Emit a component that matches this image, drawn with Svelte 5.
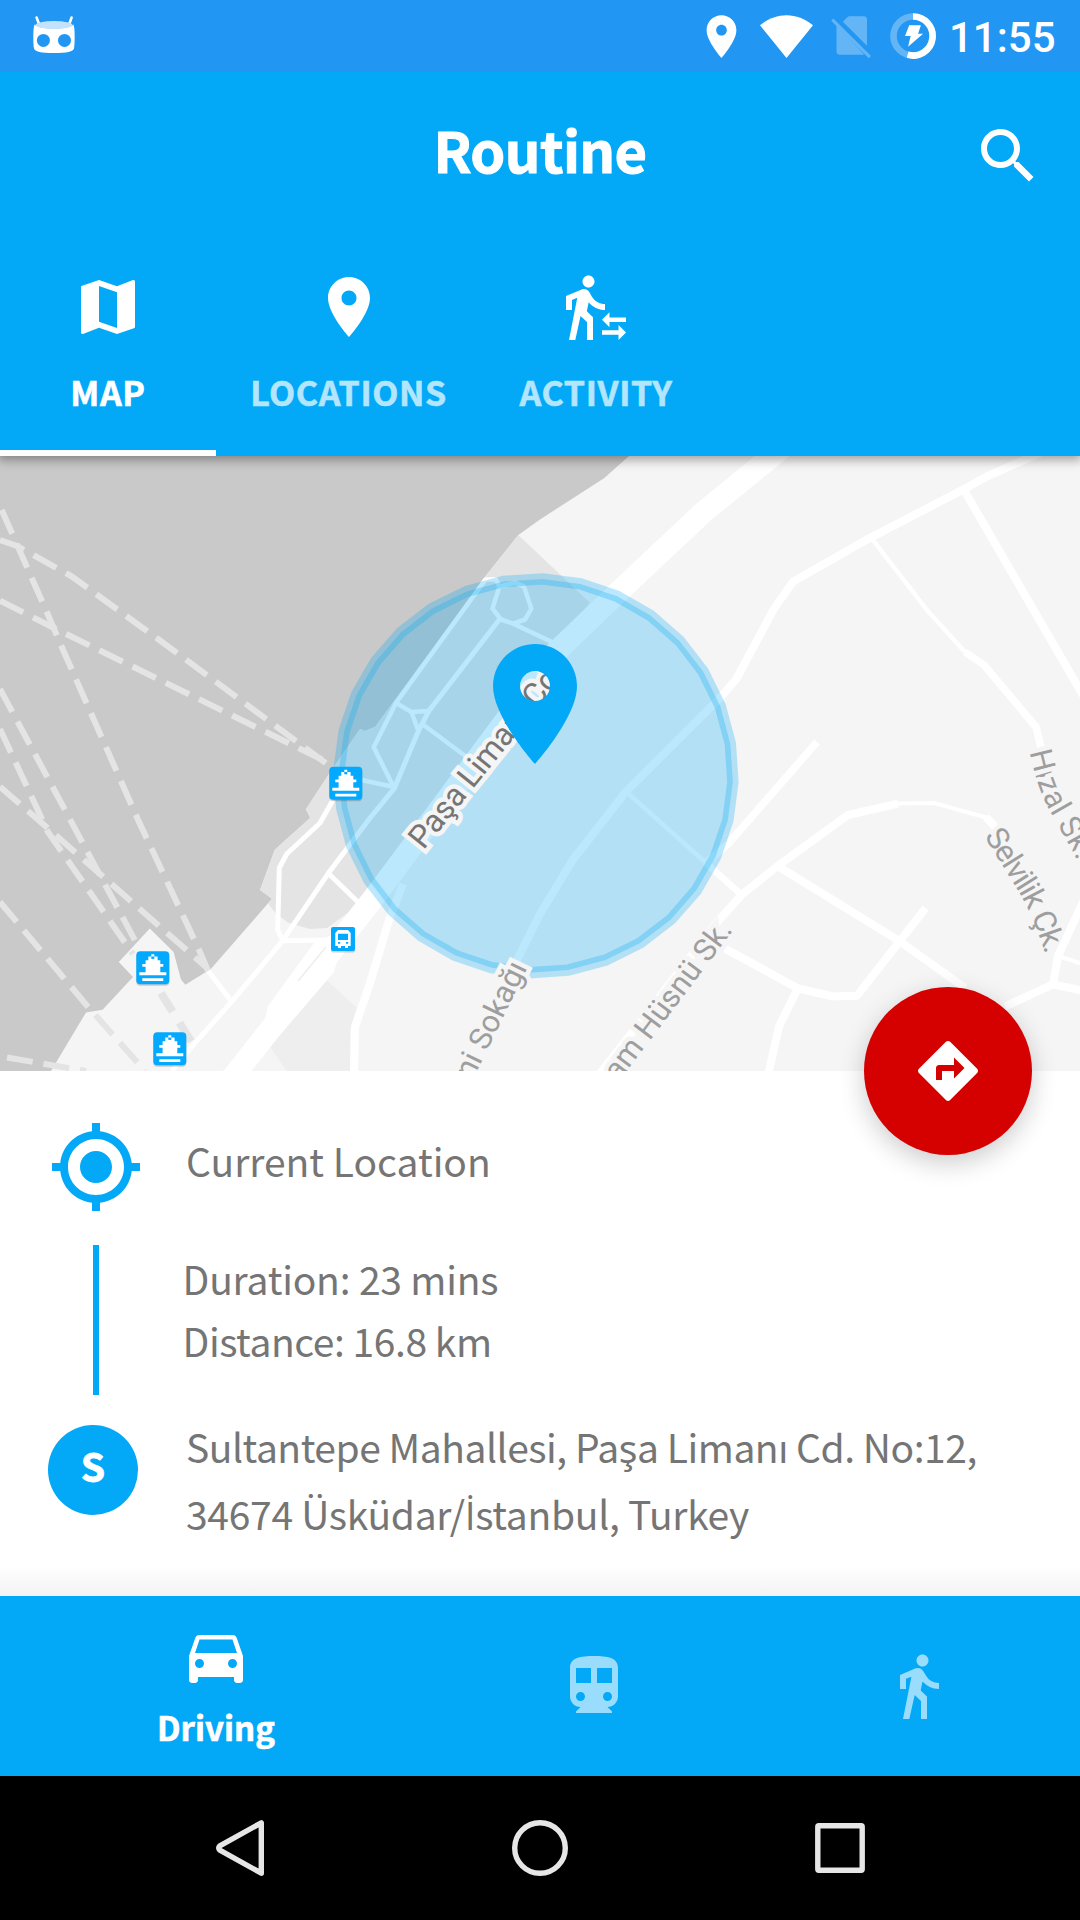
<script>
  const tabs = [
    { label: 'MAP', icon: 'map', active: true },
    { label: 'LOCATIONS', icon: 'place', active: false },
    { label: 'ACTIVITY', icon: 'transfer', active: false },
  ];

  const icons = {
    search: 'M15.5 14h-.79l-.28-.27C15.41 12.59 16 11.11 16 9.5 16 5.91 13.09 3 9.5 3S3 5.91 3 9.5 5.91 16 9.5 16c1.61 0 3.09-.59 4.23-1.57l.27.28v.79l5 4.99L20.49 19l-4.99-5zm-6 0C7.01 14 5 11.99 5 9.5S7.01 5 9.5 5 14 7.01 14 9.5 11.99 14 9.5 14z',
    map: 'M20.5 3l-.16.03L15 5.1 9 3 3.36 4.9c-.21.07-.36.25-.36.48V20.5c0 .28.22.5.5.5l.16-.03L9 18.9l6 2.1 5.64-1.9c.21-.07.36-.25.36-.48V3.5c0-.28-.22-.5-.5-.5zM15 19l-6-2.11V5l6 2.11V19z',
    place: 'M12 2C8.13 2 5 5.13 5 9c0 5.25 7 13 7 13s7-7.75 7-13c0-3.87-3.13-7-7-7zm0 9.5c-1.38 0-2.5-1.12-2.5-2.5s1.12-2.5 2.5-2.5 2.5 1.12 2.5 2.5-1.12 2.5-2.5 2.5z',
    transfer: 'M16.49 15.5v-1.75L14 16.25l2.49 2.5V17H22v-1.5zM19.51 19.75H14v1.5h5.51V23L22 20.5 19.51 18zM9.5 5.5c1.1 0 2-.9 2-2s-.9-2-2-2-2 .9-2 2 .9 2 2 2zM5.75 8.9L3 23h2.1l1.75-8L9 17v6h2v-7.55L8.95 13.4l.6-3C10.85 12 12.8 13 15 13v-2c-1.85 0-3.45-1-4.35-2.45l-.95-1.6C9.35 6.35 8.7 6 8 6c-.25 0-.5.05-.75.15L2 8.3V13h2V9.65l1.75-.75',
    directions: 'M21.71 11.29l-9-9c-.39-.39-1.02-.39-1.41 0l-9 9c-.39.39-.39 1.02 0 1.41l9 9c.39.39 1.02.39 1.41 0l9-9c.39-.38.39-1.01 0-1.41zM14 14.5V12h-4v3H8v-4c0-.55.45-1 1-1h5V7.5l3.5 3.5-3.5 3.5z',
    target: 'M12 8c-2.21 0-4 1.79-4 4s1.79 4 4 4 4-1.79 4-4-1.79-4-4-4zm8.94 3c-.46-4.17-3.77-7.48-7.94-7.94V1h-2v2.06C6.83 3.52 3.52 6.83 3.06 11H1v2h2.06c.46 4.17 3.77 7.48 7.94 7.94V23h2v-2.06c4.17-.46 7.48-3.77 7.94-7.94H23v-2h-2.06zM12 19c-3.87 0-7-3.13-7-7s3.13-7 7-7 7 3.13 7 7-3.13 7-7 7z',
    car: 'M18.92 6.01C18.72 5.42 18.16 5 17.5 5h-11c-.66 0-1.21.42-1.42 1.01L3 12v8c0 .55.45 1 1 1h1c.55 0 1-.45 1-1v-1h12v1c0 .55.45 1 1 1h1c.55 0 1-.45 1-1v-8l-2.08-5.99zM6.5 16c-.83 0-1.5-.67-1.5-1.5S5.67 13 6.5 13s1.5.67 1.5 1.5S7.33 16 6.5 16zm11 0c-.83 0-1.5-.67-1.5-1.5s.67-1.5 1.5-1.5 1.5.67 1.5 1.5-.67 1.5-1.5 1.5zM5 11l1.5-4.5h11L19 11H5z',
    subway: 'M12 2c-4.42 0-8 .5-8 4v9.5C4 17.43 5.57 19 7.5 19L6 20.5v.5h12v-.5L16.5 19c1.93 0 3.5-1.57 3.5-3.5V6c0-3.5-3.58-4-8-4zM7.5 17c-.83 0-1.5-.67-1.5-1.5S6.67 14 7.5 14s1.5.67 1.5 1.5S8.33 17 7.5 17zm3.5-6H6V6h5v5zm5.5 6c-.83 0-1.5-.67-1.5-1.5s.67-1.5 1.5-1.5 1.5.67 1.5 1.5-.67 1.5-1.5 1.5zm1.5-6h-5V6h5v5z',
    walk: 'M13.5 5.5c1.1 0 2-.9 2-2s-.9-2-2-2-2 .9-2 2 .9 2 2 2zM9.8 8.9L7 23h2.1l1.8-8 2.1 2v6h2v-7.5l-2.1-2 .6-3C14.8 12 16.8 13 19 13v-2c-1.9 0-3.5-1-4.3-2.4l-1-1.6c-.4-.6-1-1-1.7-1-.3 0-.5.1-.8.1L6 8.3V13h2V9.6l1.8-.7',
  };

  // Ferry lines across the water
  const ferryLines = [
    '1.7,510 48,614.7 60,643 138,819.7 200,952 208,971',
    '0,540 17,546 72,576.6 158,639 331,767',
    '0,600.7 52,627 331,764',
    '0,689 138,946',
    '0,729 48,832 133,954',
    '0,786.7 45,825.7 207,968',
    '0,902 86,1004.5 145,1071',
    '7,1057.5 86,1071',
  ];

  // Streets, as [width, points]
  const streets = [
    [5, '333,800 320,823 286.7,854 279.3,868 277.7,930 282.7,940.7 330,940'],
    [5, '172,1071 191.7,1046.7 231.7,1001.7 282.7,940.7 328.3,873.3 370,818 394.3,788.3 418.4,731 428.8,711 499.4,619.5'],
    [5, '231.7,1001.7 208.3,971'],
    [5, '328.3,873.3 360,904'],
    [4.5, '394.3,788.3 373.7,747.3 396,703 485.6,579.4 496,579.4 499.4,586.6 492.5,608.7 501,619.5 513,623.6 525,619.5 531.4,608.7 524,586.6 515,582.6 499.4,586.6'],
    [4.5, '513,623.6 552,642'],
    [4.5, '361.6,780 394,787'],
    [4.5, '396,703 411.5,712 428.8,711'],
    [4.5, '411.5,712 418.4,731'],
    [4.5, '423.6,725 472,761'],
    [8, '403,884 389,920 370,983 355,1027 354,1075'],
    [8, '510,975 517,960 540,914 572.7,860 626,791.5 719,699 736.3,679 774,608.7 793,581.8 870.6,537.6 963.6,489.4 987.7,476 1040,453'],
    [4.5, '871,537.6 927.5,610.7 965,652'],
    [7.5, '965,652 984,665 1036,727 1041,747'],
    [8, '964,490 1084,697'],
    [4.5, '626,791.5 705,862'],
    [6.5, '705,862 741.5,895'],
    [7.5, '817,742 728,844 705,864'],
    [8, '719,920 741.5,895 777.6,866 848,815 898,803.6'],
    [4, '898,803.6 934,803 988,818'],
    [8, '986,817 995,827'],
    [8, '777.6,866 900,941.4 965,988'],
    [8, '925.7,908 857,995.7 833,996.5 798,988.4 724,948'],
    [8, '798,988 779,1026.6 768,1075'],
    [8, '1005,1006.5 1053,984.4 1084,991'],
    [8, '1053,984.4 1058,956 1084,900'],
    [4, '1058,956 1084,964.5'],
    [8, '719,920 599,1075'],
    [22, '782,448 703.6,512 615.8,594.6 557,651 396,868 372,900 237.6,1071 225,1087'],
  ];

  const ferries = [[329.3, 766.7], [136.3, 951.3], [153.3, 1032.3]];

  const SIDES = 32;
  const radius = Array.from({ length: SIDES }, (_, i) => {
    const a = ((i * 360) / SIDES + 1.8) * (Math.PI / 180);
    return `${(536 + 197 * Math.sin(a)).toFixed(1)},${(775.8 - 197 * Math.cos(a)).toFixed(1)}`;
  }).join(' ');
</script>

{#snippet icon(name)}
  <svg class="icon" viewBox="0 0 24 24"><path d={icons[name]} /></svg>
{/snippet}

<div class="screen">
  <div class="status">
    <svg class="robot" viewBox="33 14 42 42">
      <path d="M36.6 17.5L39 24M71.6 17.5L69.3 24" stroke="#fff" stroke-width="2.6" stroke-linecap="round" />
      <path fill="#fff" fill-rule="evenodd" d="M34.5 24.5c5 5.5 34 5.5 39 0 1.5 3 1.5 19 .5 24-.8 3-7 4.6-20 4.600s-19.200-1.600-20-4.600c-1-5-1-21 .5-24zM43.400 33.900a6.500 6.500 0 1 0 0 13 6.500 6.500 0 1 0 0-13zM64.500 33.900a6.500 6.500 0 1 0 0 13 6.500 6.500 0 1 0 0-13z" />
      <ellipse cx="54" cy="25" rx="18.500" ry="4" fill="#c5e2fc" />
    </svg>
    <div class="indicators">
      <svg class="gps" viewBox="0 0 24 24"><path d={icons.place} /></svg>
      <svg class="wifi" viewBox="760 14 53 43"><path d="M786.500 57L760 24.200C768 17.600 777 14.200 786.500 14.200S805 17.600 813 24.200z" /></svg>
      <svg class="sim" viewBox="831 14 40 46">
        <path d="M842.800 21.700l4.500-4.500q1-1 2.300-1h14q3.400 0 3.400 3.400v26.200zM836.500 24.500l27.700 30q-.5.300-1.200.300h-23q-3.500 0-3.500-3.500z" />
        <path d="M833.300 18.600L871 56l-2.200 2.200L831.200 20.700z" />
      </svg>
      <svg class="battery" viewBox="890 13 46 46">
        <circle cx="913" cy="36" r="19.500" fill="none" stroke="#fff" stroke-opacity=".3" stroke-width="6.600" />
        <path d="M913 16.500A19.500 19.500 0 1 1 907.600 54.700" fill="none" stroke="#fff" stroke-width="6.600" />
        <path d="M909.200 25.300h11.700l-2.800 8.400h5l-15 13 2.500-10.700H905z" />
      </svg>
      <span class="clock">11:55</span>
    </div>
  </div>

  <header>
    <div class="toolbar">
      <h1>Routine</h1>
      <button class="search" aria-label="Search">{@render icon('search')}</button>
    </div>
    <nav class="tabs">
      {#each tabs as tab}
        <div class="tab" class:active={tab.active}>
          {@render icon(tab.icon)}
          <span>{tab.label}</span>
        </div>
      {/each}
    </nav>
  </header>

  <div class="map">
    <svg viewBox="0 456 1080 615">
      <rect x="0" y="456" width="1080" height="615" fill="#f5f5f5" />
      <polygon fill="#c9c9c9" points="0,456 629,456 604.400,478 540,519.500 518.300,535 485.600,576 375.400,726.500 365,731 360,729 330.600,771.500 305.800,809.600 310.300,817.700 274.800,849.800 260,890 272,898.800 210.800,969 185.300,984.800 181,979.600 173.600,952 149.800,928.500 118.800,962 133,977 102.600,1009.700 86,1012.500 51,1071 0,1071" />
      <polygon fill="#e4e4e4" points="518.300,535 590,602.700 552,650 373.700,890 360,904 327,928 310,929 289,923 276,914 268.600,904 272,898.800 260,890 274.800,849.800 310.300,817.700 305.800,809.600 330.600,771.500 360,729 365,731 375.400,726.500 485.600,576" />
      <polygon fill="#eeeeee" points="326.700,980 356.700,1008 350,1030 350,1071 286.700,1071 270,1046.700" />
      {#each ferryLines as points}
        <polyline class="ferry-line" {points} />
      {/each}
      <path d="M161 993L192 1043" fill="none" stroke="#e4e4e4" stroke-width="8" stroke-dasharray="22 13" />
      {#each streets as [width, points]}
        <polyline class="street" {points} stroke-width={width} />
      {/each}
      <polygon fill="#fff" points="317,939 332,936 346,928 334,972 249,1071 223.500,1071 264,1022 268,1006" />
      <path d="M326 947L298 981" stroke="#eeeeee" stroke-width="1.500" />

      <polygon points={radius} fill="#03a9f4" fill-opacity=".27" stroke="#03a9f4" stroke-opacity=".27" stroke-width="11.400" />

      <text class="label major" transform="translate(423.500 850.500) rotate(-51.200)">Paşa Limanı Cd.</text>
      <text class="label" text-anchor="end" transform="translate(527.500 967.500) rotate(-64)">ni Sokağı</text>
      <text class="label" text-anchor="end" transform="translate(733.500 930) rotate(-52.900)">am Hüsnü Sk.</text>
      <path id="selvilik" d="M984 836L1019 892Q1036 921 1049 966" fill="none" />
      <path id="hizal" d="M1029.500 752L1034 770Q1041 797 1054 818L1095 892" fill="none" />
      <text class="label tight"><textPath href="#selvilik">Selvilik Çk.</textPath></text>
      <text class="label"><textPath href="#hizal">Hızal Sk.</textPath></text>

      {#each ferries as [x, y]}
        <g transform="translate({x} {y})">
          <rect y="1.500" width="33" height="33" rx="4" fill="#000" fill-opacity=".18" />
          <rect width="33" height="33" rx="4" fill="#03a9ff" />
          <path fill="#fff" d="M15 3h3v2.200h3.300V9H24v3.700h3v2.800h-3V21h6v3H3v-3h6.300v-5.500H6v-2.800h3.300V9H12V5.200h3zM6 27h21v2.800H6z" />
          <rect x="15" y="5.200" width="3" height="2.400" fill="#03a9ff" />
        </g>
      {/each}
      <g transform="translate(331 927)">
        <rect y="1.500" width="24" height="24" rx="2" fill="#000" fill-opacity=".18" />
        <rect width="24" height="24" rx="2" fill="#03a9ff" />
        <path fill="#fff" fill-rule="evenodd" d="M7 3h10l2.700 3v13H17v2h-3v-2h-4v2H7v-2H4.300V6zM7 6.700V13h10V6.700zM7 15v1.700h2.200V15zM15 15v1.700h2.200V15z" />
      </g>
      <path fill="#03a9f7" transform="translate(463 632) scale(6)" d={icons.place} />
    </svg>
    <button class="fab" aria-label="Directions">{@render icon('directions')}</button>
  </div>

  <section class="route">
    <div class="row origin">
      <div class="mark">{@render icon('target')}</div>
      <p>Current Location</p>
    </div>
    <div class="row leg">
      <div class="mark"><i class="bar"></i></div>
      <div class="facts">
        <p class="duration">Duration: 23 mins</p>
        <p class="distance">Distance: 16.8 km</p>
      </div>
    </div>
    <div class="row destination">
      <div class="mark"><b class="avatar">S</b></div>
      <div class="address">
        <p class="line1">Sultantepe Mahallesi, Paşa Limanı Cd. No:12,</p>
        <p class="line2">34674 Üsküdar/<span class="dotted">İ</span>stanbul, Turkey</p>
      </div>
    </div>
  </section>

  <nav class="modes">
    <div class="mode active">{@render icon('car')}<span>Driving</span></div>
    <div class="mode">{@render icon('subway')}</div>
    <div class="mode">{@render icon('walk')}</div>
  </nav>

  <div class="sysnav">
    <svg viewBox="0 0 60 60"><path d="M51.300 4.800V55.200L9.800 32.200q-2-2.200 0-4.400z" /></svg>
    <svg viewBox="0 0 60 60"><circle cx="30" cy="30" r="25.300" /></svg>
    <svg viewBox="0 0 60 60"><rect x="7.800" y="7.800" width="44.400" height="44.400" rx="1" /></svg>
  </div>
</div>

<style>
  :global(body) { background: #fff; }
  .screen {
    width: 1080px;
    height: 1920px;
    display: flex;
    flex-direction: column;
    overflow: hidden;
    background: #fff;
    color: #757575;
    font-family: "Noto Sans CJK SC", "Noto Sans", sans-serif;
  }
  svg { display: block; fill: #fff; flex: none; }
  p, h1 { margin: 0; font-weight: 400; }
  button { border: 0; padding: 0; background: none; }
  .icon { width: 72px; height: 72px; }

  .status {
    position: relative;
    z-index: 2;
    height: 72px;
    flex: none;
    box-sizing: border-box;
    padding: 0 25px 0 33px;
    display: flex;
    align-items: center;
    justify-content: space-between;
    background: #2196f3;
  }
  .robot { width: 42px; height: 42px; margin-bottom: 2px; }
  .indicators { display: flex; align-items: center; }
  .gps { width: 51px; height: 51px; margin-right: 13px; }
  .wifi { width: 53px; height: 43px; margin-right: 18px; }
  .sim { width: 40px; height: 46px; margin: 2px 19px 0 0; opacity: .3; }
  .battery { width: 46px; height: 46px; margin-right: 13px; }
  .clock {
    width: 106px;
    padding-top: 4px;
    color: #fff;
    font: 500 42px/68px Roboto, sans-serif;
    white-space: nowrap;
  }

  header {
    position: relative;
    z-index: 1;
    height: 384px;
    flex: none;
    background: #03a9f7;
    color: #fff;
    box-shadow: 0 2px 10px 2px rgba(0, 0, 0, .35);
  }
  .toolbar {
    height: 168px;
    display: grid;
    grid-template-columns: 108px 1fr 108px;
    align-items: center;
  }
  h1 {
    grid-column: 2;
    text-align: center;
    font-weight: 700;
    font-size: 56px;
    line-height: 60px;
    letter-spacing: -.6px;
    -webkit-text-stroke: 1px #fff;
    padding-bottom: 14px;
  }
  .tabs { height: 216px; display: flex; }
  .tab {
    box-sizing: border-box;
    padding: 31px 36px 0;
    display: flex;
    flex-direction: column;
    align-items: center;
    font-weight: 700;
    font-size: 34px;
    line-height: 40px;
    white-space: nowrap;
  }
  .tab:nth-child(1) { width: 216px; }
  .tab:nth-child(2) { width: 265px; }
  .tab:nth-child(3) { width: 230px; }
  .tab span { margin-top: 29px; color: #b3e5fd; letter-spacing: .6px; -webkit-text-stroke: .6px #b3e5fd; }
  .tab.active { box-shadow: inset 0 -6px #fff; }
  .tab.active span { color: #fff; -webkit-text-stroke-color: #fff; }

  .map { position: relative; height: 615px; flex: none; }
  .map > svg { width: 1080px; height: 615px; overflow: hidden; }
  .street { fill: none; stroke: #fff; stroke-linejoin: round; }
  .ferry-line { fill: none; stroke: #e4e4e4; stroke-width: 6; stroke-dasharray: 26 11; }
  .label {
    font: 400 31px Roboto, sans-serif;
    fill: #9e9e9e;
    stroke: #f5f5f5;
    stroke-width: 9px;
    stroke-linejoin: miter;
    paint-order: stroke;
  }
  .label.major { font-size: 32px; letter-spacing: -.2px; fill: #757575; }
  .label.tight { font-size: 31px; letter-spacing: -1.200px; stroke: none; }
  .fab {
    position: absolute;
    left: 864px;
    top: 531px;
    width: 168px;
    height: 168px;
    border-radius: 50%;
    display: grid;
    place-items: center;
    background: #d50000;
    box-shadow: 0 8px 26px rgba(0, 0, 0, .2);
  }

  .route {
    height: 525px;
    flex: none;
    box-sizing: border-box;
    padding-top: 48px;
    background: linear-gradient(#fff 495px, #f3f3f3);
    font-size: 39px;
    white-space: nowrap;
  }
  .row { display: flex; }
  .mark { width: 186px; flex: none; box-sizing: border-box; padding-left: 48px; }
  .mark .icon { width: 96px; height: 96px; fill: #03a9f7; }
  .origin { height: 126px; }
  .origin p { line-height: 82px; }
  .leg { height: 180px; }
  .bar { display: block; width: 6px; height: 150px; margin-left: 45px; background: #03a9f7; }
  .facts { margin: 2px 0 0 -3.500px; line-height: 62px; }
  .duration { letter-spacing: -.2px; }
  .distance { letter-spacing: -.45px; }
  .avatar {
    width: 90px;
    height: 90px;
    border-radius: 50%;
    display: grid;
    place-items: center;
    background: #03a9f7;
    color: #fff;
    font-size: 39px;
    line-height: 80px;
    align-content: start;
    -webkit-text-stroke: .8px #fff;
  }
  .address { line-height: 67px; margin-top: -12px; }
  .line1 { letter-spacing: -.47px; }
  .line2 { letter-spacing: -.3px; }
  .dotted { font-family: "Open Sans", sans-serif; line-height: 1; }

  .modes {
    height: 180px;
    flex: none;
    display: grid;
    grid-template-columns: 432px 324px 324px;
    background: #03a9f7;
    color: #fff;
  }
  .mode { display: flex; flex-direction: column; align-items: center; padding-top: 54px; }
  .mode:not(.active) .icon { opacity: .6; }
  .mode.active { padding-top: 24px; }
  .mode span {
    margin-top: 15px;
    font-size: 33px;
    line-height: 40px;
    font-weight: 700;
    -webkit-text-stroke: .6px #fff;
  }

  .sysnav {
    height: 144px;
    flex: none;
    display: flex;
    justify-content: center;
    align-items: center;
    gap: 240px;
    background: #000;
  }
  .sysnav svg { width: 60px; height: 60px; fill: none; stroke: #e6e6e6; stroke-width: 5.400; stroke-linejoin: round; }
</style>
